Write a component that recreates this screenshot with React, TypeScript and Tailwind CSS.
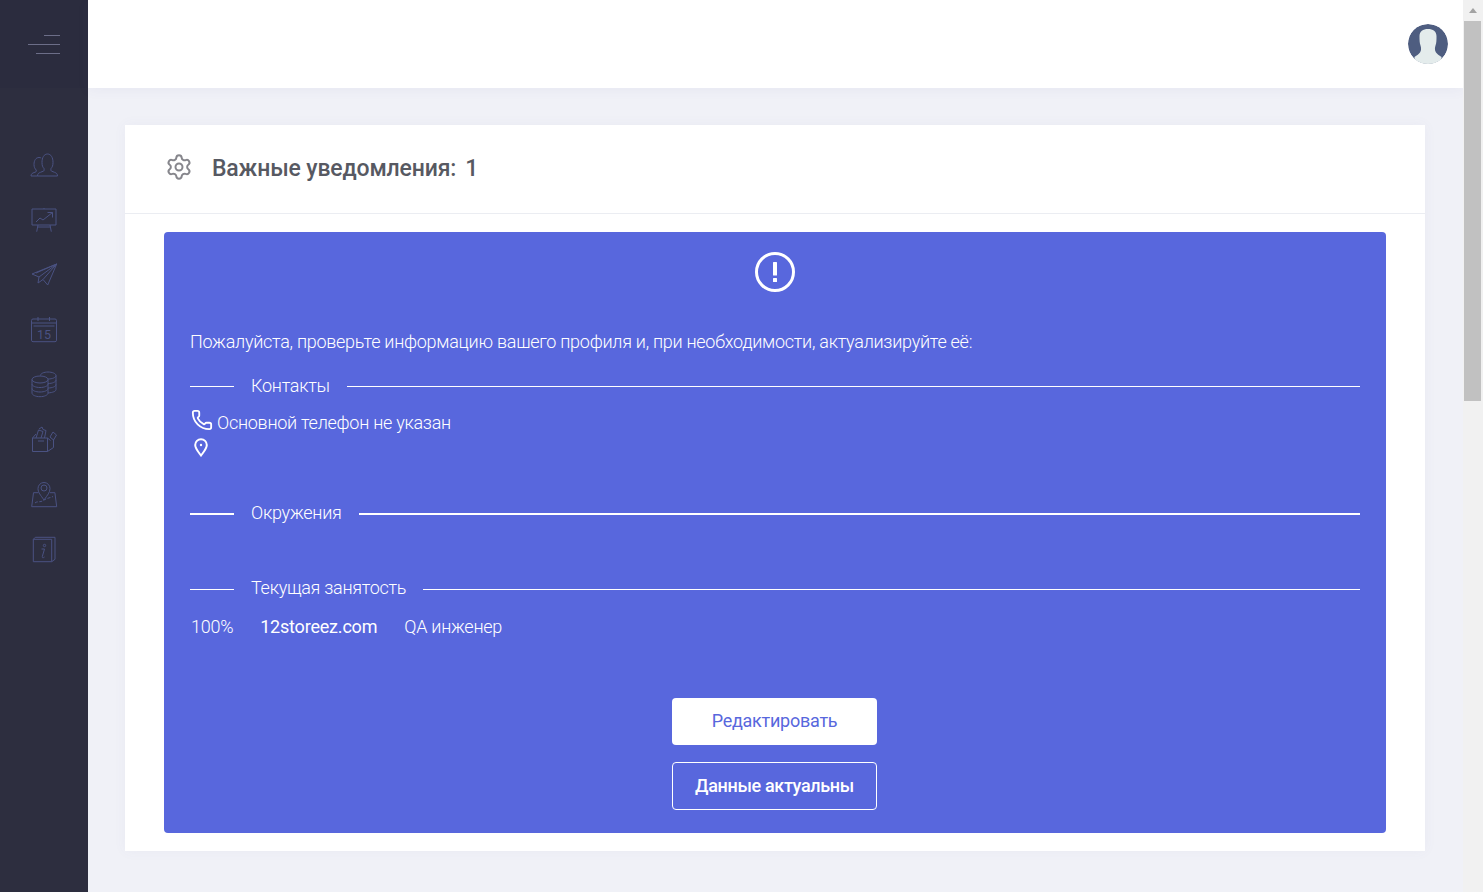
import { Phone, Settings } from "lucide-react";

const iconCls = "h-[28px] w-[28px] fill-none stroke-[#4a5282] stroke-1";

function PeopleIcon() {
  return (
    <svg viewBox="0 0 28 28" className={iconCls}>
      <path d="M7.500 26c0-2 1-3 3-3.700l3.200-1.300c.5-.3.500-1.500.3-2.500-1.300-1.300-2-3-2-6 0-5 2-8.500 5.500-8.500s5.500 3.500 5.500 8.500c0 3-.7 4.700-2 6-.2 1-.2 2.200.3 2.500l3.200 1.300c2 .7 3 1.700 3 3.700z" />
      <path d="M7.500 26H1c0-1.500.7-2.500 2-3l3-1.200c.4-.3.4-1 .2-1.800-1.300-1.300-2.200-3-2.200-5.500 0-4 1.800-7 5-7 .8 0 1.500.2 2.200.5" />
    </svg>
  );
}

function ChartIcon() {
  return (
    <svg viewBox="0 0 28 28" className={iconCls}>
      <path d="M2 4h24v16H2zM14 4V3M8 20l-1.300 6.700M20 20l1.300 6.700M7.500 22h13" />
      <path d="M6 17l4-4 3 2 9.500-7.500M17.500 7.500h5v5" />
    </svg>
  );
}

function PlaneIcon() {
  return (
    <svg viewBox="0 -1 28 28" className={iconCls}>
      <path d="M26.700 3L2 13l7 3zM9 16l-1 6 5-3.500M26.700 3L13 18.500l4.700 5.500zM26.700 3L6 12" />
    </svg>
  );
}

function CalendarIcon() {
  return (
    <svg viewBox="0 0 28 28" className={iconCls}>
      <rect x="1.500" y="3" width="25" height="22.700" rx="1.500" />
      <path d="M1.500 7h25M3.500 10h21M8 1v4M19.500 1v4" />
      <text x="14" y="23" textAnchor="middle" className="fill-[#4a5282] stroke-none font-['Roboto',sans-serif] text-[12.500px]">15</text>
    </svg>
  );
}

function CoinsIcon() {
  return (
    <svg viewBox="0 0 28 28" className={iconCls}>
      <ellipse cx="10" cy="8.500" rx="8" ry="3.500" />
      <path d="M2 8.500v13.500c0 2 3.600 3.700 8 3.700s8-1.700 8-3.700V8.500M2 13c0 2 3.600 3.500 8 3.500s8-1.500 8-3.500M2 17.500c0 2 3.600 3.500 8 3.500s8-1.500 8-3.500" />
      <path d="M10.500 4.500c0-2 3.400-3.500 7.500-3.500s8 1.500 8 3.500-3.600 3.500-8 3.500M26 4.500v14c0 1.800-3 3-8 3.500M18 12.500c4.400 0 8-1.500 8-3.500M18 17c4.400 0 8-1.500 8-3.500" />
    </svg>
  );
}

function BoxIcon() {
  return (
    <svg viewBox="0 0 28 28" className={iconCls}>
      <path d="M2.500 12v13.500h15l6-4v-8M17.500 25.500V12h-15M8 15h6" />
      <path d="M2.500 12l3.500-4M6 12l2.500-8 4.500 1.500L11 12M9 3l3-2 1 2.500 3 1-1.500 7.500" />
      <path d="M20 11l3-5 3.500 3-3 5zM17.500 12l3 2.500" />
    </svg>
  );
}

function MapIcon() {
  return (
    <svg viewBox="0 0 28 28" className={iconCls}>
      <path d="M14 19c-3.500-5-6-7.500-6-11.500a6 6 0 0 1 12 0c0 4-2.500 6.500-6 11.500z" />
      <circle cx="14" cy="7" r="3" />
      <path d="M8.500 11.700h-5l-1.800 14h25l-1.800-14h-5" />
      <path d="M5 22c1-1.500 4-1 6-1.500s3-1.500 5-2.500 5-1.500 7-2.500" strokeDasharray="3 1.500" />
    </svg>
  );
}

function BookIcon() {
  return (
    <svg viewBox="0 0 28 28" className={iconCls}>
      <path d="M3.300 3.300h18.400v22.400H3.300zM3.300 3.300l2-2H25v22l-3.300 2.400" />
      <path d="M11.500 13h3l-2.200 7.500c-.3 1.300.7 1.800 2.200.5" />
      <circle cx="14.500" cy="9.500" r="1.200" />
    </svg>
  );
}

const navIcons = [PeopleIcon, ChartIcon, PlaneIcon, CalendarIcon, CoinsIcon, BoxIcon, MapIcon, BookIcon];

function Avatar() {
  return (
    <svg viewBox="0 0 40 40" className="h-[40px] w-[40px] rounded-full">
      <circle cx="20" cy="20" r="20" fill="#4e5d80" />
      <path
        fill="#e4ecec"
        d="M20 5c-5 0-8.500 2.500-8.500 7 0 4 0 7 1 9.500.7 2 1 5-.5 7-1 1.300-3 3-5.500 4.500V40h27v-7c-2.500-1.500-4.500-3.200-5.500-4.500-1.500-2-1.200-5-.5-7 1-2.500 1-5.500 1-9.500 0-4.500-3.500-7-8.500-7z"
      />
    </svg>
  );
}

function Divider({ label, thick, lift }: { label: string; thick?: boolean; lift?: boolean }) {
  const line = thick ? "h-[2px] bg-white" : "h-px bg-white";
  return (
    <div className="flex items-center">
      <div className={`w-[44px] ${line}`} />
      <span className={`px-[17px] text-[18px] leading-[24px] font-light tracking-[-0.27px] ${lift ? "-translate-y-px" : ""}`}>{label}</span>
      <div className={`flex-1 ${line}`} />
    </div>
  );
}

export default function App() {
  return (
    <div className="flex h-[892px] overflow-hidden bg-[#f0f1f7] font-['Roboto',sans-serif]">
      <aside className="flex w-[88px] shrink-0 flex-col items-center bg-[#2d2e3f]">
        <div className="flex h-[88px] w-full flex-col items-end justify-center gap-[8px] bg-[#2b2c3e] pr-[28px]">
          <div className="h-px w-[16px] bg-[#6c6e88]" />
          <div className="h-px w-[32px] bg-[#6c6e88]" />
          <div className="h-px w-[24px] bg-[#6c6e88]" />
        </div>
        <nav className="mt-[62px] flex flex-col gap-[27.200px]">
          {navIcons.map((Icon, i) => (
            <Icon key={i} />
          ))}
        </nav>
      </aside>

      <div className="flex min-w-0 flex-1 flex-col">
        <header className="flex h-[88px] shrink-0 items-center justify-end bg-white pr-[15px] shadow-[0_2px_12px_rgba(90,90,160,0.06)]">
          <Avatar />
        </header>

        <main className="pl-[37px] pr-[38px] pt-[37px]">
          <section className="bg-white pb-[18px] shadow-[0_0_12px_rgba(90,90,160,0.05)]">
            <div className="flex h-[89px] items-center border-b border-[#ebedf2] pl-[40px] pb-[4px]">
              <Settings size={28} strokeWidth={1.7} className="text-[#86868c]" />
              <h2 className="ml-[19px] mt-[4px] text-[23px] font-medium tracking-[-0.15px] text-[#575962]">Важные уведомления:</h2>
              <span className="ml-[9px] mt-[4px] text-[23px] font-medium text-[#575962]">1</span>
            </div>

            <div className="mx-[39px] mt-[18px] flex h-[601px] flex-col rounded-[4px] bg-[#5867dd] px-[26px] text-white">
              <svg viewBox="0 0 40 40" className="mx-auto mt-[20px] h-[40px] w-[40px] shrink-0 fill-white">
                <circle cx="20" cy="20" r="18.500" fill="none" stroke="#fff" strokeWidth="3" />
                <rect x="18" y="10" width="4" height="13.500" rx="0.500" />
                <rect x="18" y="26" width="4" height="4" rx="0.500" />
              </svg>
              <p className="mt-[36px] text-[18px] leading-[27px] font-light tracking-[-0.27px]">
                Пожалуйста, проверьте информацию вашего профиля и, при необходимости, актуализируйте её:
              </p>
              <div className="mt-[19px]">
                <Divider label="Контакты" />
              </div>
              <div className="mt-[12px] flex h-[25px] items-center text-[18px] leading-[25px] font-light tracking-[-0.27px]">
                <Phone size={22} strokeWidth={2} className="ml-[1px] mr-[4px] -translate-y-[3px] shrink-0" />
                Основной телефон не указан
              </div>
              <svg viewBox="0 0 14 19" className="ml-[4px] mt-[3px] h-[19px] w-[14px] shrink-0 fill-none stroke-white stroke-2">
                <path d="M7 17.500C4 13.500 1.200 10.500 1.200 7a5.800 5.800 0 0 1 11.600 0c0 3.500-2.800 6.500-5.800 10.500z" />
                <circle cx="7" cy="7" r="1.200" className="fill-white stroke-none" />
              </svg>
              <div className="mt-[45px]">
                <Divider label="Окружения" thick lift />
              </div>
              <div className="mt-[51px]">
                <Divider label="Текущая занятость" lift />
              </div>
              <div className="mt-[12px] flex gap-[27px] pl-[1px] text-[18px] leading-[27px] font-light tracking-[-0.27px]">
                <span>100%</span>
                <span className="font-normal tracking-[-0.2px]">12storeez.com</span>
                <span>QA инженер</span>
              </div>
              <div className="mt-[58px] flex flex-col items-center gap-[17px] pr-[1px]">
                <button className="h-[47px] w-[205px] rounded-[4px] bg-white pb-[2px] text-[18px] tracking-[-0.25px] text-[#5867dd]">Редактировать</button>
                <button className="h-[48px] w-[205px] rounded-[4px] border border-white pb-[2px] text-[18px] font-medium tracking-[-0.35px]">Данные актуальны</button>
              </div>
            </div>
          </section>
        </main>
      </div>

      <div className="flex w-[20px] shrink-0 flex-col items-start bg-[#f1f1f1] pl-[1px]">
        <div className="flex h-[21px] w-[17px] items-center justify-center">
          <div className="h-0 w-0 border-x-[4.500px] border-b-[5px] border-x-transparent border-b-[#a3a3a3]" />
        </div>
        <div className="h-[380px] w-[17px] bg-[#c1c1c1]" />
      </div>
    </div>
  );
}
